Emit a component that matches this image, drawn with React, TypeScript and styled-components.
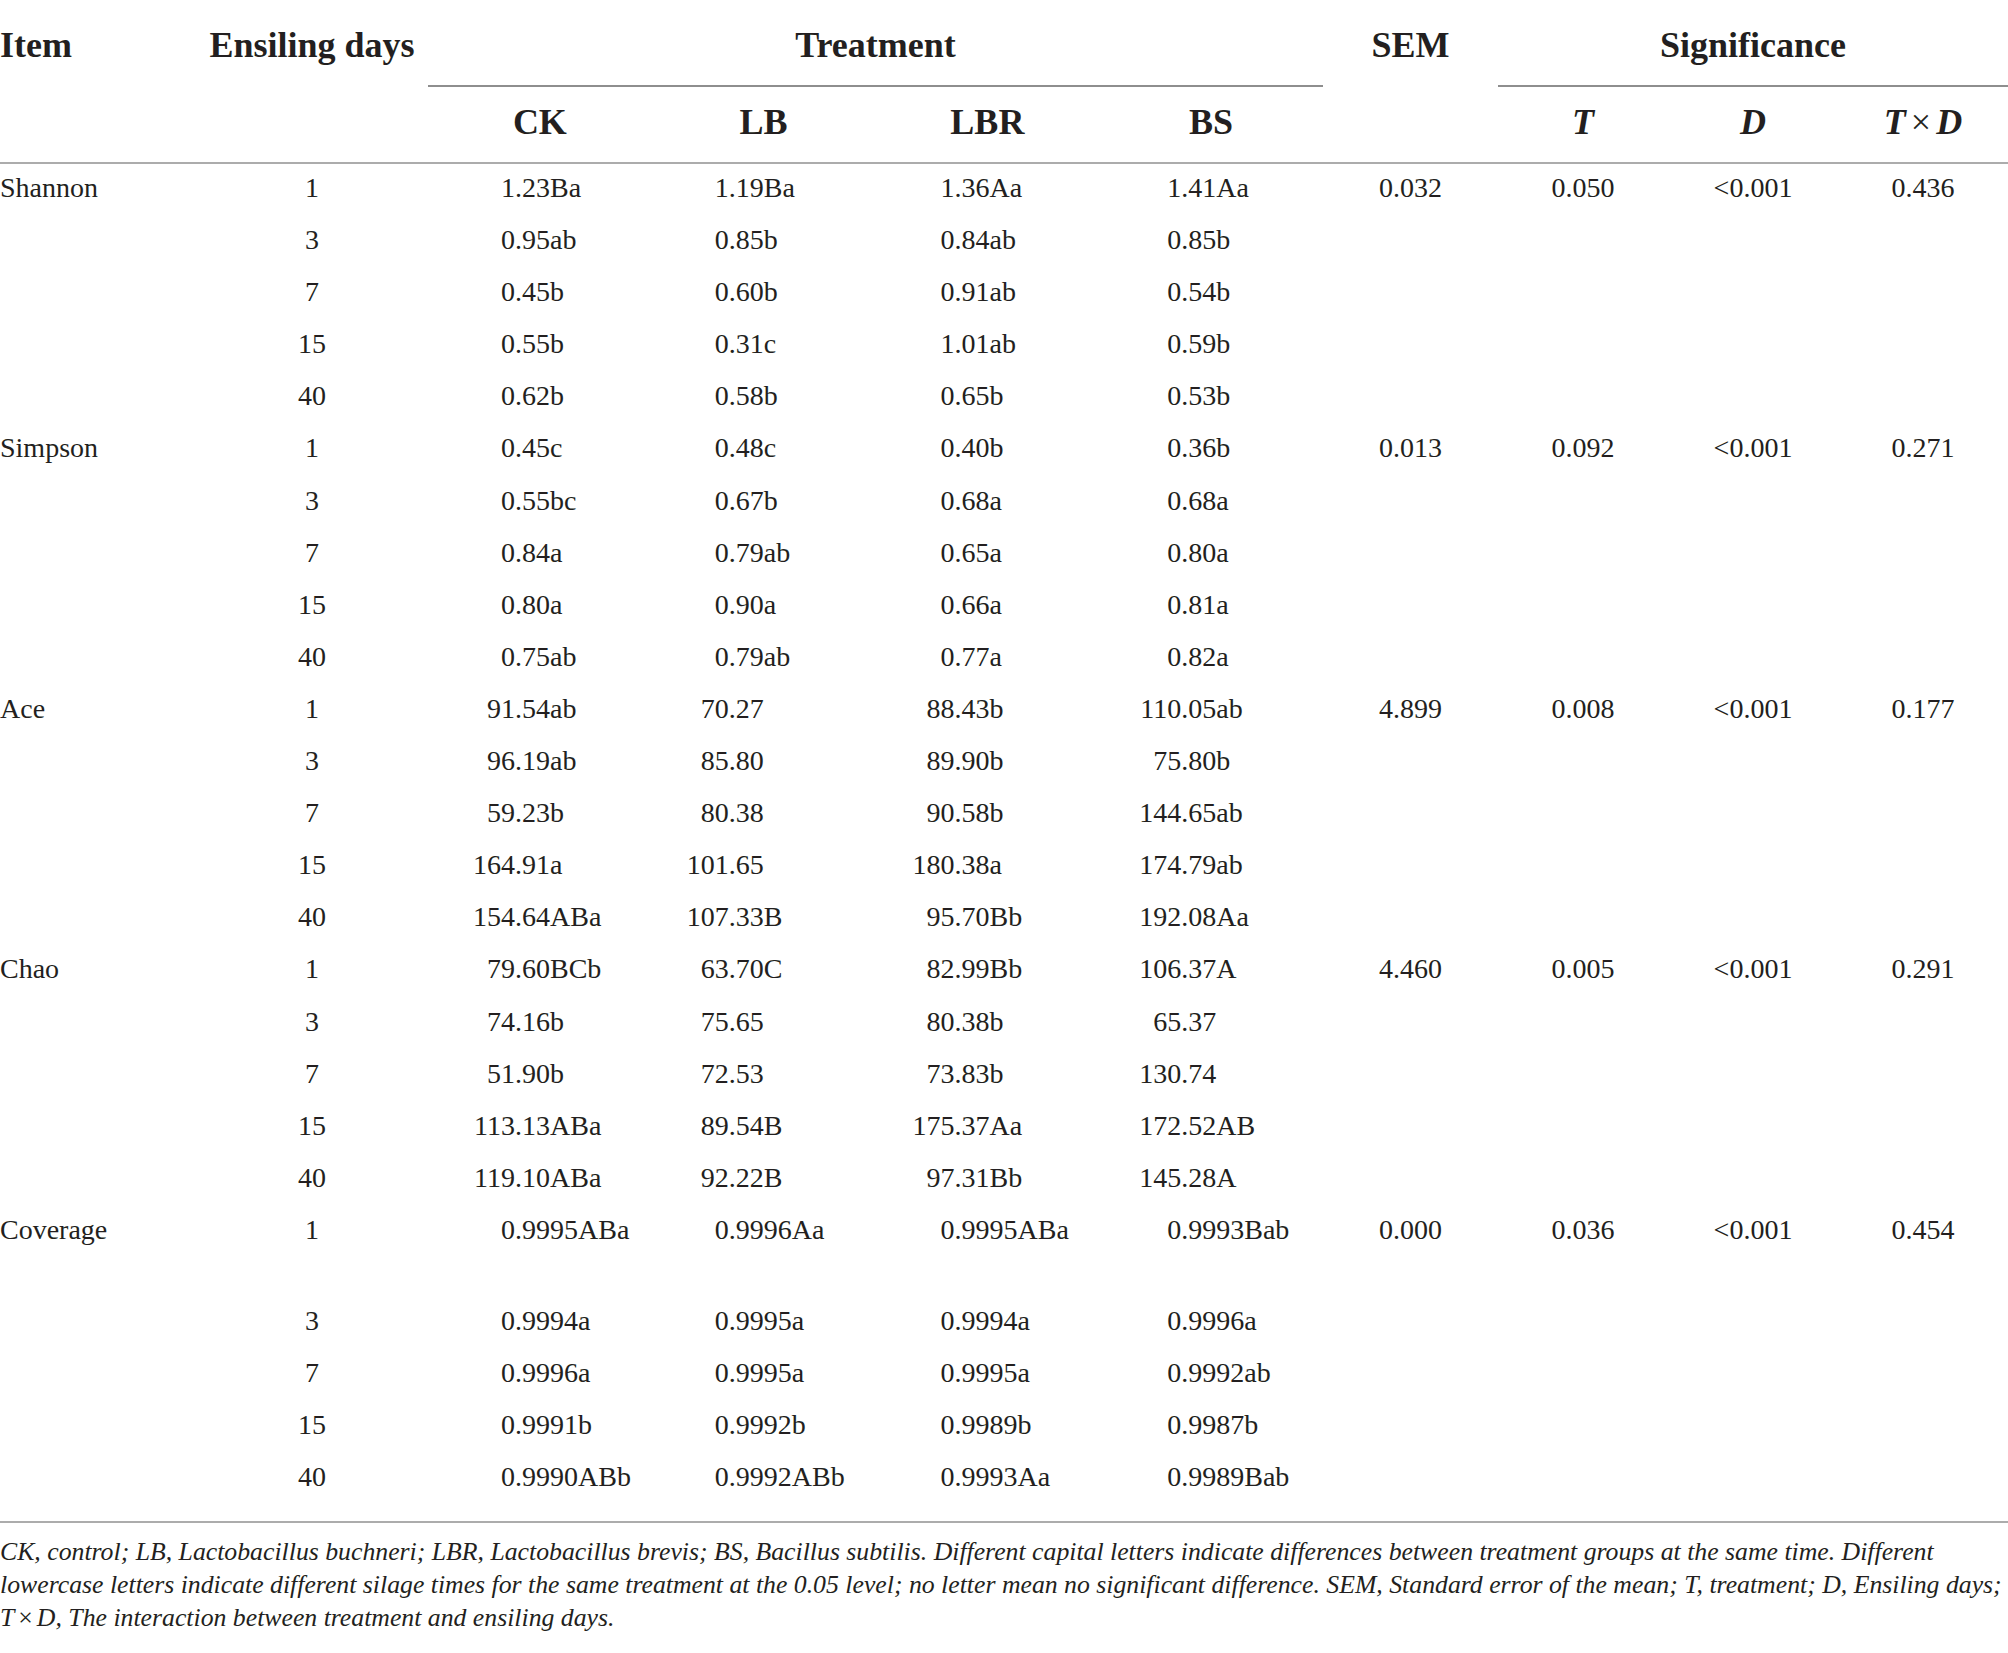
import React from "react";
import styled, { createGlobalStyle } from "styled-components";

const GlobalStyle = createGlobalStyle`
  html, body {
    margin: 0;
    padding: 0;
    background: #ffffff;
  }
  body {
    font-family: "Liberation Serif", "Times New Roman", serif;
    color: #231f20;
  }
`;

const COLS = "196px 232px repeat(4, 223.75px) 175px repeat(3, 170px)";

const Page = styled.div`
  width: 2008px;
`;

const Head = styled.div`
  display: grid;
  grid-template-columns: ${COLS};
  border-bottom: 2px solid #acacac;
  font-size: 36px;
  font-weight: bold;
  line-height: 40px;
`;

const HeadCell = styled.div<{
  $col: string;
  $row: number;
  $align?: "left" | "center";
  $rule?: boolean;
  $italic?: boolean;
}>`
  grid-column: ${(p) => p.$col};
  grid-row: ${(p) => p.$row};
  text-align: ${(p) => p.$align ?? "center"};
  padding: ${(p) => (p.$row === 1 ? "25px 0 20px" : "15px 0 20px")};
  border-bottom: ${(p) => (p.$rule ? "2px solid #8e8e8e" : "none")};
  font-style: ${(p) => (p.$italic ? "italic" : "normal")};
  white-space: nowrap;
`;

const Times = styled.span<{ $gap: number }>`
  font-style: normal;
  font-weight: normal;
  padding: 0 ${(p) => p.$gap}px;
`;

const Body = styled.div`
  padding-top: 1px;
  padding-bottom: 15px;
  border-bottom: 2px solid #acacac;
`;

const Row = styled.div<{ $tall?: boolean }>`
  display: grid;
  grid-template-columns: ${COLS};
  font-size: 28px;
  line-height: 46px;
  padding-bottom: ${(p) => (p.$tall ? "44.8px" : "6.1px")};
  white-space: nowrap;
`;

const ItemCell = styled.div`
  text-align: left;
`;

const CenterCell = styled.div`
  text-align: center;
`;

const ValueCell = styled.div`
  display: flex;
`;

const IntPart = styled.span<{ $pivot: number }>`
  flex: 0 0 ${(p) => p.$pivot}px;
  text-align: right;
`;

const FracPart = styled.span`
  text-align: left;
`;

const Footnote = styled.p`
  margin: 0;
  padding-top: 13px;
  font-style: italic;
  font-size: 25.75px;
  line-height: 32.8px;
  white-space: nowrap;
`;

type Group = {
  item: string;
  ck: string[];
  lb: string[];
  lbr: string[];
  bs: string[];
  sem: string;
  t: string;
  d: string;
  td: string;
};

const DAYS = ["1", "3", "7", "15", "40"];

const GROUPS: Group[] = [
  {
    item: "Shannon",
    ck: ["1.23Ba", "0.95ab", "0.45b", "0.55b", "0.62b"],
    lb: ["1.19Ba", "0.85b", "0.60b", "0.31c", "0.58b"],
    lbr: ["1.36Aa", "0.84ab", "0.91ab", "1.01ab", "0.65b"],
    bs: ["1.41Aa", "0.85b", "0.54b", "0.59b", "0.53b"],
    sem: "0.032",
    t: "0.050",
    d: "<0.001",
    td: "0.436",
  },
  {
    item: "Simpson",
    ck: ["0.45c", "0.55bc", "0.84a", "0.80a", "0.75ab"],
    lb: ["0.48c", "0.67b", "0.79ab", "0.90a", "0.79ab"],
    lbr: ["0.40b", "0.68a", "0.65a", "0.66a", "0.77a"],
    bs: ["0.36b", "0.68a", "0.80a", "0.81a", "0.82a"],
    sem: "0.013",
    t: "0.092",
    d: "<0.001",
    td: "0.271",
  },
  {
    item: "Ace",
    ck: ["91.54ab", "96.19ab", "59.23b", "164.91a", "154.64ABa"],
    lb: ["70.27", "85.80", "80.38", "101.65", "107.33B"],
    lbr: ["88.43b", "89.90b", "90.58b", "180.38a", "95.70Bb"],
    bs: ["110.05ab", "75.80b", "144.65ab", "174.79ab", "192.08Aa"],
    sem: "4.899",
    t: "0.008",
    d: "<0.001",
    td: "0.177",
  },
  {
    item: "Chao",
    ck: ["79.60BCb", "74.16b", "51.90b", "113.13ABa", "119.10ABa"],
    lb: ["63.70C", "75.65", "72.53", "89.54B", "92.22B"],
    lbr: ["82.99Bb", "80.38b", "73.83b", "175.37Aa", "97.31Bb"],
    bs: ["106.37A", "65.37", "130.74", "172.52AB", "145.28A"],
    sem: "4.460",
    t: "0.005",
    d: "<0.001",
    td: "0.291",
  },
  {
    item: "Coverage",
    ck: ["0.9995ABa", "0.9994a", "0.9996a", "0.9991b", "0.9990ABb"],
    lb: ["0.9996Aa", "0.9995a", "0.9995a", "0.9992b", "0.9992ABb"],
    lbr: ["0.9995ABa", "0.9994a", "0.9995a", "0.9989b", "0.9993Aa"],
    bs: ["0.9993Bab", "0.9996a", "0.9992ab", "0.9987b", "0.9989Bab"],
    sem: "0.000",
    t: "0.036",
    d: "<0.001",
    td: "0.454",
  },
];

const PIVOTS = { ck: 87, lb: 77, lbr: 79, bs: 82 };

function Value({ v, pivot }: { v: string; pivot: number }) {
  const idx = v.indexOf(".");
  const int = idx >= 0 ? v.slice(0, idx) : v;
  const rest = idx >= 0 ? v.slice(idx) : "";
  return (
    <ValueCell>
      <IntPart $pivot={pivot}>{int}</IntPart>
      <FracPart>{rest}</FracPart>
    </ValueCell>
  );
}

function GroupRows({ g }: { g: Group }) {
  return (
    <>
      {DAYS.map((day, i) => {
        const first = i === 0;
        return (
          <Row key={day} $tall={first && g.item === "Coverage"}>
            <ItemCell>{first ? g.item : ""}</ItemCell>
            <CenterCell>{day}</CenterCell>
            <Value v={g.ck[i]} pivot={PIVOTS.ck} />
            <Value v={g.lb[i]} pivot={PIVOTS.lb} />
            <Value v={g.lbr[i]} pivot={PIVOTS.lbr} />
            <Value v={g.bs[i]} pivot={PIVOTS.bs} />
            <CenterCell>{first ? g.sem : ""}</CenterCell>
            <CenterCell>{first ? g.t : ""}</CenterCell>
            <CenterCell>{first ? g.d : ""}</CenterCell>
            <CenterCell>{first ? g.td : ""}</CenterCell>
          </Row>
        );
      })}
    </>
  );
}

export default function App() {
  return (
    <Page>
      <GlobalStyle />
      <Head>
        <HeadCell $col="1" $row={1} $align="left">Item</HeadCell>
        <HeadCell $col="2" $row={1}>Ensiling days</HeadCell>
        <HeadCell $col="3 / span 4" $row={1} $rule>Treatment</HeadCell>
        <HeadCell $col="7" $row={1}>SEM</HeadCell>
        <HeadCell $col="8 / span 3" $row={1} $rule>Significance</HeadCell>
        <HeadCell $col="3" $row={2}>CK</HeadCell>
        <HeadCell $col="4" $row={2}>LB</HeadCell>
        <HeadCell $col="5" $row={2}>LBR</HeadCell>
        <HeadCell $col="6" $row={2}>BS</HeadCell>
        <HeadCell $col="8" $row={2} $italic>T</HeadCell>
        <HeadCell $col="9" $row={2} $italic>D</HeadCell>
        <HeadCell $col="10" $row={2} $italic>
          T<Times $gap={5}>×</Times>D
        </HeadCell>
      </Head>
      <Body>
        {GROUPS.map((g) => (
          <GroupRows key={g.item} g={g} />
        ))}
      </Body>
      <Footnote>
        CK, control; LB, Lactobacillus buchneri; LBR, Lactobacillus brevis; BS, Bacillus subtilis. Different capital letters indicate differences between treatment groups at the same time. Different
        <br />
        lowercase letters indicate different silage times for the same treatment at the 0.05 level; no letter mean no significant difference. SEM, Standard error of the mean; T, treatment; D, Ensiling days;
        <br />
        T<Times $gap={4}>×</Times>D, The interaction between treatment and ensiling days.
      </Footnote>
    </Page>
  );
}
